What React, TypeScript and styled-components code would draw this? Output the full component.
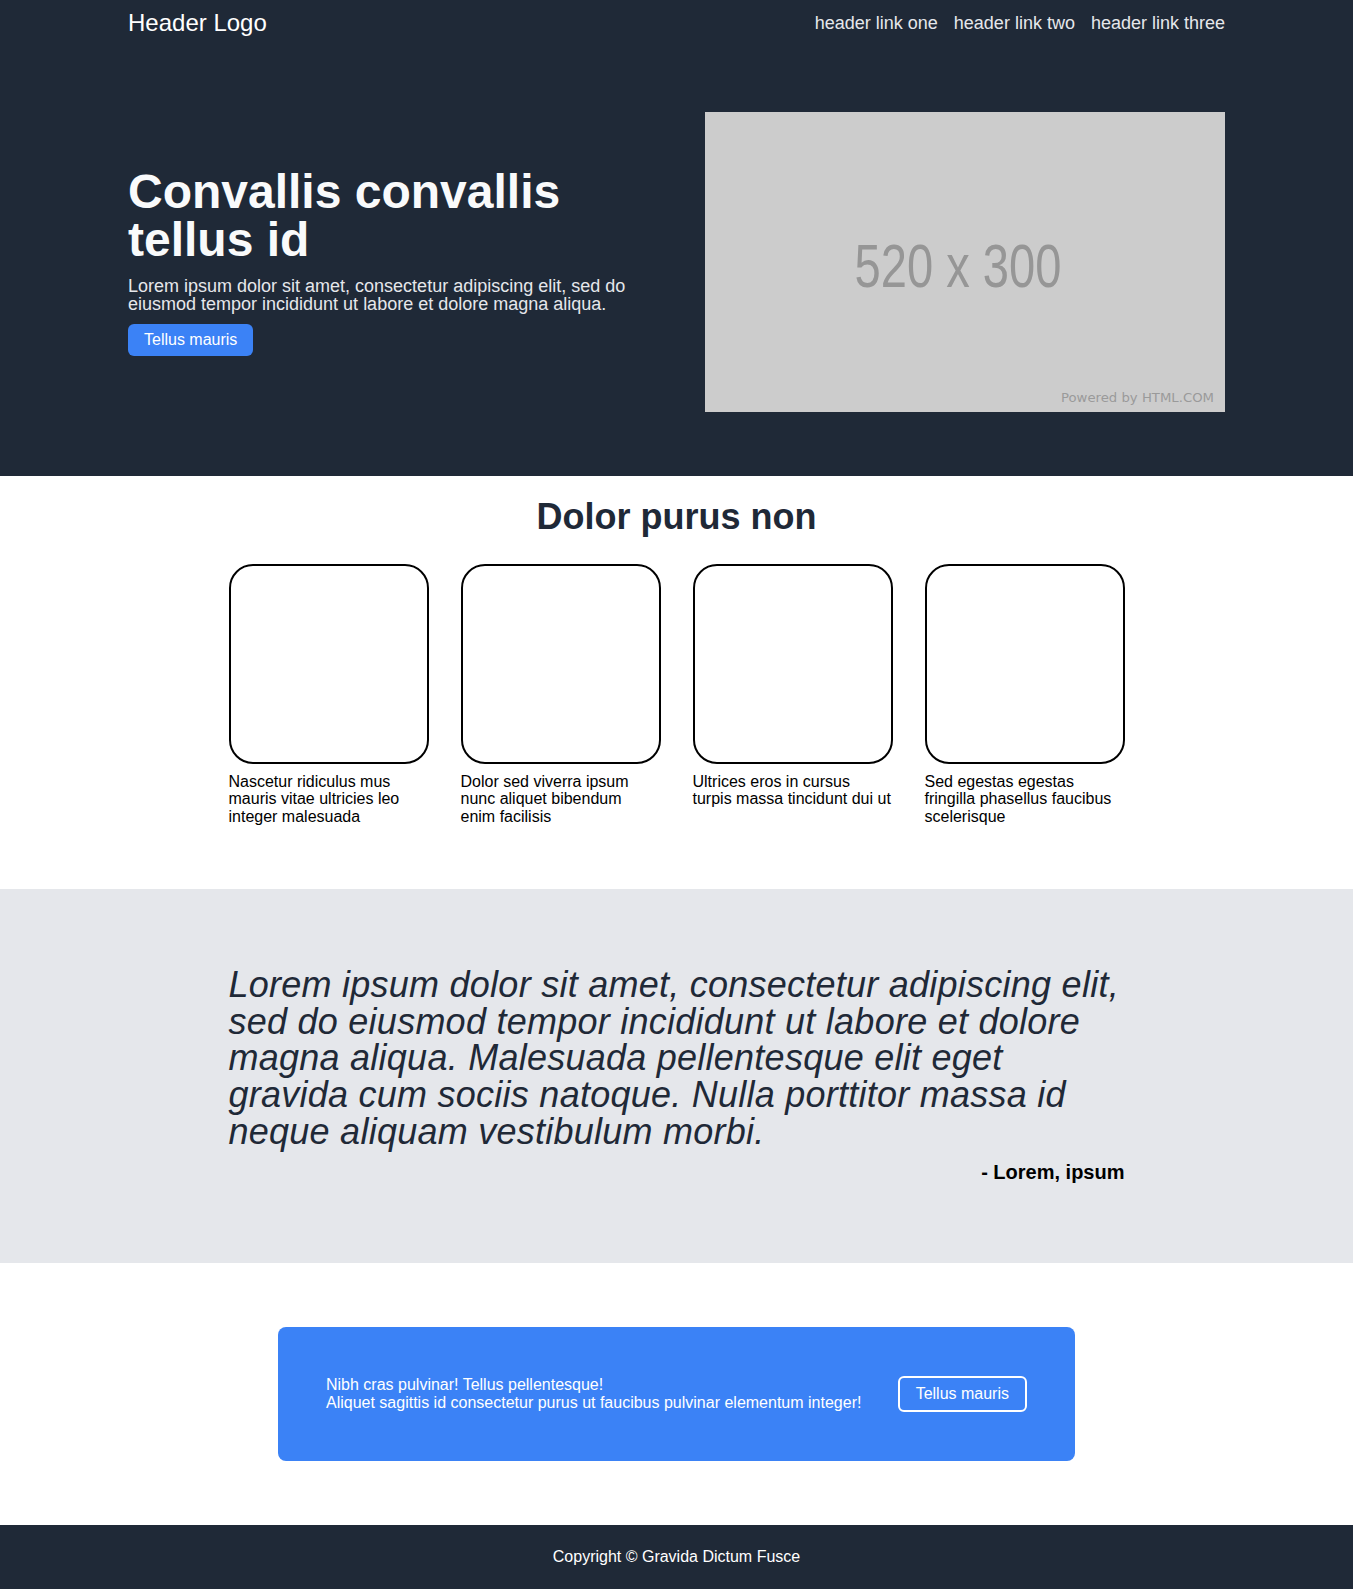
import React from "react";
import styled, { createGlobalStyle } from "styled-components";

const GlobalStyle = createGlobalStyle`
  html, body {
    margin: 0;
    padding: 0;
    background: #ffffff;
    font-family: "Liberation Sans", Helvetica, Arial, sans-serif;
  }
  * { box-sizing: border-box; }
`;

const Container = styled.div`
  width: 1097px;
  margin: 0 auto;
`;

const Header = styled.header`
  background: #1f2937;
`;

const HeaderBar = styled(Container)`
  height: 48px;
  display: flex;
  align-items: center;
  justify-content: space-between;
  padding-bottom: 2px;
`;

const Logo = styled.a`
  font-size: 24px;
  line-height: 32px;
  color: #ffffff;
  text-decoration: none;
`;

const Nav = styled.nav`
  display: flex;
  gap: 16px;
`;

const NavLink = styled.a`
  font-size: 18px;
  line-height: 28px;
  color: #e5e7eb;
  text-decoration: none;
`;

const Hero = styled.section`
  background: #1f2937;
  padding: 64px 0;
`;

const HeroInner = styled(Container)`
  display: flex;
  align-items: center;
  justify-content: space-between;
`;

const HeroText = styled.div`
  width: 548px;
  display: flex;
  flex-direction: column;
  align-items: flex-start;
  gap: 12px;
`;

const HeroTitle = styled.h1`
  margin: 0;
  font-size: 48px;
  line-height: 48.6px;
  font-weight: 700;
  color: #f9fafb;
`;

const HeroLead = styled.p`
  margin: 0;
  font-size: 18px;
  line-height: 18.2px;
  color: #e5e7eb;
`;

const SolidButton = styled.a`
  display: inline-block;
  margin-top: -1px;
  background: #3b82f6;
  color: #ffffff;
  font-size: 16px;
  line-height: 24px;
  padding: 4px 16px;
  border-radius: 6px;
  text-decoration: none;
`;

const Placeholder = styled.svg`
  display: block;
  width: 520px;
  height: 300px;
  flex: none;
`;

const Features = styled.section`
  padding: 21px 0 64px;
`;

const SectionTitle = styled.h2`
  margin: 0 0 27px;
  text-align: center;
  font-size: 36px;
  line-height: 40px;
  font-weight: 700;
  color: #1f2937;
`;

const CardGrid = styled.div`
  display: grid;
  grid-template-columns: repeat(4, 200px);
  gap: 32px;
  justify-content: center;
`;

const Card = styled.div`
  display: flex;
  flex-direction: column;
`;

const CardFrame = styled.div`
  width: 200px;
  height: 200px;
  border: 2px solid #000000;
  border-radius: 24px;
`;

const CardCaption = styled.p`
  margin: 9px 0 0;
  font-size: 16px;
  line-height: 17.25px;
  color: #000000;
`;

const QuoteSection = styled.section`
  background: #e5e7eb;
  padding: 78px 0 77px;
`;

const QuoteInner = styled.figure`
  width: 896px;
  margin: 0 auto;
  display: flex;
  flex-direction: column;
`;

const QuoteText = styled.blockquote`
  margin: 0;
  font-size: 36px;
  line-height: 36.75px;
  letter-spacing: 0.25px;
  font-style: italic;
  font-weight: 300;
  color: #1f2937;
`;

const QuoteCite = styled.figcaption`
  margin-top: 7px;
  text-align: right;
  font-size: 20px;
  line-height: 28px;
  font-weight: 700;
  color: #000000;
`;

const CtaSection = styled.section`
  padding: 64px 0;
`;

const CtaBox = styled.div`
  width: 797px;
  margin: 0 auto;
  background: #3b82f6;
  border-radius: 8px;
  padding: 49px 48px;
  display: flex;
  align-items: center;
  justify-content: space-between;
`;

const CtaText = styled.p`
  margin: 0;
  font-size: 16px;
  line-height: 17.3px;
  color: #ffffff;
`;

const OutlineButton = styled.a`
  display: inline-block;
  border: 2px solid #ffffff;
  border-radius: 6px;
  color: #ffffff;
  font-size: 16px;
  line-height: 24px;
  padding: 4px 16px;
  text-decoration: none;
`;

const Footer = styled.footer`
  background: #1f2937;
  height: 64.5px;
  display: flex;
  align-items: center;
  justify-content: center;
`;

const FooterText = styled.p`
  margin: 0;
  font-size: 16px;
  line-height: 24px;
  color: #ffffff;
`;

const cards = [
  "Nascetur ridiculus mus mauris vitae ultricies leo integer malesuada",
  "Dolor sed viverra ipsum nunc aliquet bibendum enim facilisis",
  "Ultrices eros in cursus turpis massa tincidunt dui ut",
  "Sed egestas egestas fringilla phasellus faucibus scelerisque",
];

export default function App() {
  return (
    <>
      <GlobalStyle />
      <Header>
        <HeaderBar>
          <Logo href="#">Header Logo</Logo>
          <Nav>
            <NavLink href="#">header link one</NavLink>
            <NavLink href="#">header link two</NavLink>
            <NavLink href="#">header link three</NavLink>
          </Nav>
        </HeaderBar>
      </Header>

      <Hero>
        <HeroInner>
          <HeroText>
            <HeroTitle>Convallis convallis tellus id</HeroTitle>
            <HeroLead>
              Lorem ipsum dolor sit amet, consectetur adipiscing elit, sed do
              eiusmod tempor incididunt ut labore et dolore magna aliqua.
            </HeroLead>
            <SolidButton href="#">Tellus mauris</SolidButton>
          </HeroText>
          <Placeholder viewBox="0 0 520 300" role="img" aria-label="520 x 300">
            <rect x="0" y="0" width="520" height="300" fill="#cccccc" />
            <text
              x="253"
              y="175"
              textAnchor="middle"
              fontFamily="'Liberation Sans', Arial, sans-serif"
              fontSize="62"
              fill="#969696"
              textLength="207"
              lengthAdjust="spacingAndGlyphs"
            >
              520 x 300
            </text>
            <text
              x="509"
              y="290"
              textAnchor="end"
              fontFamily="'DejaVu Sans', Verdana, sans-serif"
              fontSize="12.5"
              fill="#9a9a9a"
              textLength="153"
              lengthAdjust="spacingAndGlyphs"
            >
              Powered by HTML.COM
            </text>
          </Placeholder>
        </HeroInner>
      </Hero>

      <Features>
        <SectionTitle>Dolor purus non</SectionTitle>
        <CardGrid>
          {cards.map((c) => (
            <Card key={c}>
              <CardFrame />
              <CardCaption>{c}</CardCaption>
            </Card>
          ))}
        </CardGrid>
      </Features>

      <QuoteSection>
        <QuoteInner>
          <QuoteText>
            Lorem ipsum dolor sit amet, consectetur adipiscing elit, sed do
            eiusmod tempor incididunt ut labore et dolore magna aliqua.
            Malesuada pellentesque elit eget gravida cum sociis natoque. Nulla
            porttitor massa id neque aliquam vestibulum morbi.
          </QuoteText>
          <QuoteCite>- Lorem, ipsum</QuoteCite>
        </QuoteInner>
      </QuoteSection>

      <CtaSection>
        <CtaBox>
          <CtaText>
            Nibh cras pulvinar! Tellus pellentesque!
            <br />
            Aliquet sagittis id consectetur purus ut faucibus pulvinar elementum
            integer!
          </CtaText>
          <OutlineButton href="#">Tellus mauris</OutlineButton>
        </CtaBox>
      </CtaSection>

      <Footer>
        <FooterText>Copyright © Gravida Dictum Fusce</FooterText>
      </Footer>
    </>
  );
}
